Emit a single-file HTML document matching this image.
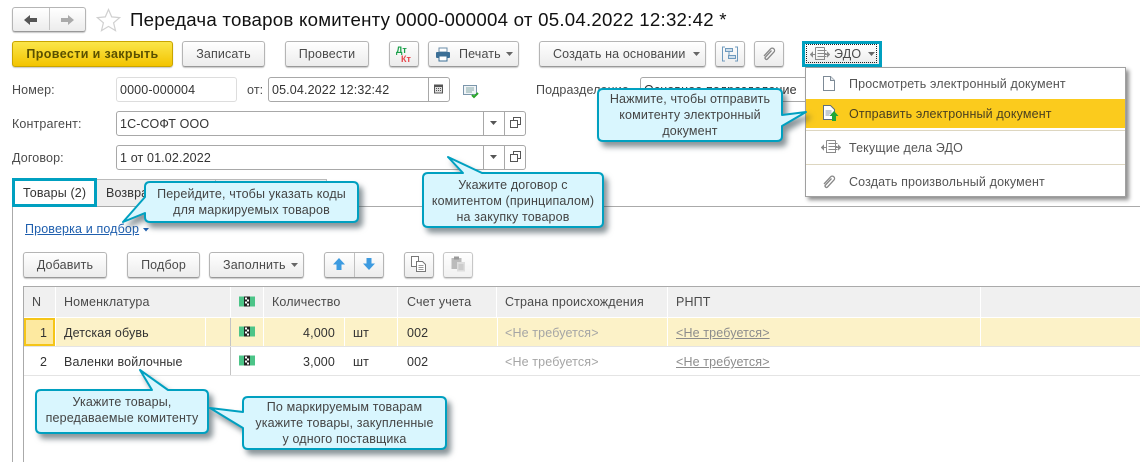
<!DOCTYPE html>
<html lang="ru"><head><meta charset="utf-8"><title>Передача товаров</title>
<style>
html,body{margin:0;padding:0;background:#fff}
#p{position:relative;width:1140px;height:462px;overflow:hidden;background:#fff;font:12.5px/14px "Liberation Sans","Noto Sans CJK SC",sans-serif;color:#4a4a4a;letter-spacing:.14px}
#p div,#p svg.a{position:absolute}
.t{white-space:nowrap}
.b{box-sizing:border-box;border:1px solid #b5b5b5;border-bottom:1px solid #999;border-radius:3px;background:linear-gradient(#fff,#ececec);box-shadow:0 1px 1px rgba(0,0,0,.22);text-align:center;white-space:nowrap;line-height:24px;height:26px}
.i{box-sizing:border-box;border:1px solid #a8a8a8;border-radius:3px;background:#fff;height:25px;line-height:25px;padding-left:3px;white-space:nowrap;color:#333}
.l{width:1px;background:#a8a8a8}
.h{background:#f0f0f0;height:30px;top:287px;line-height:30px;padding-left:9px;box-sizing:border-box;white-space:nowrap}
.r{line-height:14px;white-space:nowrap;color:#333}
.c{text-align:center;white-space:nowrap;color:#444;line-height:16px}
.m{left:849px;white-space:nowrap;color:#555}
</style></head><body><div id="p">

<!-- nav -->
<div class="b" style="left:12px;top:7px;width:74px;height:25px"></div>
<div style="left:49px;top:8px;width:1px;height:22px;background:#c4c4c4"></div>
<svg class="a" style="left:22px;top:13px" width="56" height="14"><path d="M2 7l6-5v3h7v4H8v3z" fill="#555"/><path d="M52 7l-6-5v3h-7v4h7v3z" fill="#aaa"/></svg>
<svg class="a" style="left:96px;top:8px" width="25" height="24"><path d="M12.5 1.5l3.2 7.4 8 .7-6.1 5.2 1.900 7.800-7-4.200-7 4.200 1.900-7.800L1.300 9.600l8-.7z" fill="#fff" stroke="#d0d0d0" stroke-width="1.200"/></svg>
<div class="t" style="left:130px;top:9px;font-size:18.67px;line-height:22px;color:#111;letter-spacing:.24px">Передача товаров комитенту 0000-000004 от 05.04.2022 12:32:42 *</div>

<!-- cmd bar -->
<div class="b" style="left:12px;top:41px;width:161px;background:linear-gradient(#fbe64a,#f3c400);border-color:#c9a500;font-weight:bold;color:#5a5000;letter-spacing:.38px">Провести и закрыть</div>
<div class="b" style="left:182px;top:41px;width:83px">Записать</div>
<div class="b" style="left:285px;top:41px;width:84px">Провести</div>
<div class="b" style="left:389px;top:41px;width:30px"></div>
<div class="t" style="left:396px;top:46px;font-size:9px;line-height:9px;font-weight:bold;color:#1aa04a;letter-spacing:0">Дт</div>
<div class="t" style="left:401px;top:55px;font-size:9px;line-height:9px;font-weight:bold;color:#e8454a;letter-spacing:0">Кт</div>
<div class="b" style="left:428px;top:41px;width:91px;text-align:left;padding-left:30px">Печать</div>
<svg class="a" style="left:435px;top:47px" width="16" height="15"><path d="M4 1h8v4H4z" fill="#fff" stroke="#6a8ca8"/><rect x="1" y="5" width="14" height="6" rx="1" fill="#3b6f96"/><path d="M4 9h8v5H4z" fill="#fff" stroke="#3b6f96"/></svg>
<svg class="a" style="left:506px;top:52px" width="8" height="5"><path d="M0 0h7L3.500 4z" fill="#666"/></svg>
<div class="b" style="left:539px;top:41px;width:167px;text-align:left;padding-left:13px">Создать на основании</div>
<svg class="a" style="left:693px;top:52px" width="8" height="5"><path d="M0 0h7L3.500 4z" fill="#666"/></svg>
<div class="b" style="left:715px;top:41px;width:30px"></div>
<svg class="a" style="left:722px;top:46px" width="16" height="16" fill="none"><path d="M3 1H.5v14H3M13 1h2.500v14H13" stroke="#6f9abd"/><rect x="3.500" y="2.500" width="7" height="3" fill="#cfdfec" stroke="#6f9abd"/><rect x="6.500" y="9.500" width="7" height="3" fill="#cfdfec" stroke="#6f9abd"/><path d="M7 6v3" stroke="#6f9abd"/></svg>
<div class="b" style="left:754px;top:41px;width:30px"></div>
<svg class="a" style="left:762px;top:46px" width="15" height="16" fill="none" stroke="#888" stroke-width="1.300"><path d="M2 10l6.500-7a2.300 2.300 0 0 1 3.500 3l-6.500 7a1.400 1.400 0 0 1-2-2l6-6.500"/></svg>

<!-- EDO -->
<div style="left:802px;top:41px;width:80px;height:26px;box-sizing:border-box;border:3px solid #00a0c0;background:linear-gradient(#fff,#ececec)"></div>
<div style="left:806px;top:44px;width:71px;height:19px;box-sizing:border-box;border:1px dotted #222"></div>
<svg class="a" style="left:810px;top:46px" width="20" height="16" fill="none" stroke="#8a8a8a"><path d="M5.500 1.500h9M5.500 1.500v12h9v-12M7.500 4.500h9M7.500 7.500h9M7.500 10.500h9M1 8.500h4M15 8.500h4"/><path d="M.5 8.500l2-2v4zM19.500 8.500l-2-2v4z" fill="#8a8a8a"/></svg>
<div class="t" style="left:834px;top:47px">ЭДО</div>
<svg class="a" style="left:868px;top:52px" width="8" height="5"><path d="M0 0h7L3.500 4z" fill="#666"/></svg>

<!-- fields -->
<div class="t" style="left:12px;top:83px">Номер:</div>
<div class="i" style="left:116px;top:77px;width:121px;border-color:#ddd">0000-000004</div>
<div class="t" style="left:247px;top:83px">от:</div>
<div class="i" style="left:268px;top:77px;width:182px">05.04.2022 12:32:42</div>
<div class="l" style="left:428px;top:78px;height:23px"></div>
<svg class="a" style="left:433px;top:83px" width="12" height="12"><path d="M1 1.500h9v9H1z" fill="#555"/><path d="M2 4h7v5.500H2z" fill="#ddd"/><path d="M3 5h1v1H3zM5 5h1v1H5zM7 5h1v1H7zM3 7h1v1H3zM5 7h1v1H5zM7 7h1v1H7z" fill="#555"/></svg>
<svg class="a" style="left:463px;top:85px" width="17" height="14"><path d="M.5.500h13v9H.5z" fill="#f0f4f7" stroke="#7b96ab"/><path d="M3 3h8M3 5h8M3 7h6" stroke="#8aa"/><path d="M9 10l2 2 4-4" fill="none" stroke="#2aa52a" stroke-width="2"/></svg>
<div class="t" style="left:536px;top:83px">Подразделение</div>
<div class="i" style="left:640px;top:77px;width:180px">Основное подразделение</div>

<div class="t" style="left:12px;top:117px">Контрагент:</div>
<div class="i" style="left:116px;top:111px;width:410px">1С-СОФТ ООО</div>
<div class="l" style="left:483px;top:112px;height:23px"></div><div class="l" style="left:504px;top:112px;height:23px"></div>
<svg class="a" style="left:490px;top:121px" width="8" height="5"><path d="M0 0h7L3.500 4z" fill="#555"/></svg>
<svg class="a" style="left:510px;top:117px" width="11" height="11" fill="#fff" stroke="#555"><path d="M3.500.500h7v7h-7z"/><path d="M.5 3.500h7v7h-7z"/></svg>

<div class="t" style="left:12px;top:151px">Договор:</div>
<div class="i" style="left:116px;top:145px;width:410px">1 от 01.02.2022</div>
<div class="l" style="left:483px;top:146px;height:23px"></div><div class="l" style="left:504px;top:146px;height:23px"></div>
<svg class="a" style="left:490px;top:155px" width="8" height="5"><path d="M0 0h7L3.500 4z" fill="#555"/></svg>
<svg class="a" style="left:510px;top:151px" width="11" height="11" fill="#fff" stroke="#555"><path d="M3.500.500h7v7h-7z"/><path d="M.5 3.500h7v7h-7z"/></svg>

<!-- tabs -->
<div style="left:12px;top:206px;width:1128px;height:1px;background:#aaa"></div>
<div style="left:12px;top:206px;width:1px;height:256px;background:#aaa"></div>
<div style="left:97px;top:179px;width:118px;height:27px;background:#eee;border-top:1px solid #bbb;box-sizing:border-box"></div>
<div style="left:215px;top:179px;width:112px;height:27px;background:#eee;border:1px solid #bbb;border-bottom:0;box-sizing:border-box"></div>
<div class="t" style="left:106px;top:186px;color:#333">Возврат</div>
<div style="left:12px;top:178px;width:85px;height:29px;box-sizing:border-box;border:3px solid #00a0c0;background:#fff"></div>
<div class="t" style="left:23px;top:186px;color:#333">Товары (2)</div>

<div class="t" style="left:25px;top:222px;color:#1f5fae;text-decoration:underline">Проверка и подбор</div>
<svg class="a" style="left:142px;top:228px" width="8" height="5"><path d="M1 0h6L4 3.500z" fill="#1f5fae"/></svg>

<div class="b" style="left:23px;top:252px;width:84px">Добавить</div>
<div class="b" style="left:127px;top:252px;width:73px">Подбор</div>
<div class="b" style="left:209px;top:252px;width:95px;text-align:left;padding-left:13px">Заполнить</div>
<svg class="a" style="left:291px;top:263px" width="8" height="5"><path d="M0 0h7L3.500 4z" fill="#666"/></svg>
<div class="b" style="left:324px;top:252px;width:60px"></div>
<div style="left:354px;top:253px;width:1px;height:24px;background:#c0c0c0"></div>
<svg class="a" style="left:332px;top:257px" width="44" height="15"><path d="M7 1l6 6.500H9.500V13h-5V7.500H1z" fill="#3d9be0"/><path d="M37 13l6-6.500h-3.500V1h-5v5.500H31z" fill="#3d9be0"/></svg>
<div class="b" style="left:404px;top:252px;width:30px"></div>
<svg class="a" style="left:411px;top:256px" width="16" height="16" fill="#fff" stroke="#777"><path d="M.5.500h7v10h-7z"/><path d="M5.500 5.500h6l3 3v7h-9z"/><path d="M7.500 9.500h5M7.500 11.500h5M7.500 13.500h5" stroke="#999"/></svg>
<div class="b" style="left:443px;top:252px;width:30px;opacity:.75"></div>
<svg class="a" style="left:451px;top:256px" width="15" height="16"><path d="M.5 2h10v11H.5z" fill="#bbb"/><path d="M3 .500h5v3H3z" fill="#999"/><path d="M6 6h8v9.500H6z" fill="#ddd"/><path d="M7.500 9h5M7.500 11h5M7.500 13h5" stroke="#bbb"/></svg>

<!-- table -->
<div style="left:23px;top:286px;width:1117px;height:1px;background:#aaa"></div>
<div style="left:23px;top:286px;width:1px;height:176px;background:#aaa"></div>
<div class="h" style="left:24px;width:31px;padding-left:8px">N</div>
<div class="h" style="left:56px;width:174px;padding-left:8px">Номенклатура</div>
<div class="h" style="left:231px;width:32px"></div>
<div class="h" style="left:264px;width:133px;padding-left:8px">Количество</div>
<div class="h" style="left:398px;width:98px">Счет учета</div>
<div class="h" style="left:497px;width:170px;padding-left:8px">Страна происхождения</div>
<div class="h" style="left:668px;width:312px;padding-left:8px">РНПТ</div>
<div class="h" style="left:981px;width:159px"></div>

<div style="left:24px;top:318px;width:1116px;height:28px;background:#fcf2c8"></div>
<div style="left:24px;top:318px;width:31px;height:28px;box-sizing:border-box;border:2px solid #f5c518;background:#fde9a0"></div>
<div style="left:55px;top:318px;width:1px;height:28px;background:#fff"></div>
<div style="left:205px;top:318px;width:1px;height:28px;background:#fff"></div>
<div style="left:230px;top:318px;width:1px;height:57px;background:#c4c4c4"></div>
<div style="left:263px;top:318px;width:1px;height:28px;background:#fff"></div>
<div style="left:344px;top:318px;width:1px;height:28px;background:#fff"></div>
<div style="left:397px;top:318px;width:1px;height:28px;background:#fff"></div>
<div style="left:497px;top:318px;width:1px;height:28px;background:#fff"></div>
<div style="left:667px;top:318px;width:1px;height:28px;background:#fff"></div>
<div style="left:980px;top:318px;width:1px;height:28px;background:#fff"></div>
<div style="left:24px;top:346px;width:1116px;height:1px;background:#e4e4e4"></div>
<div style="left:24px;top:375px;width:1116px;height:1px;background:#e4e4e4"></div>

<svg class="a" style="left:239px;top:296px" width="17" height="11"><rect width="16" height="10" y=".5" fill="#4cc488"/><rect x="5" y=".5" width="6" height="10" fill="#222"/><path d="M6 1.500h2v2H6zM8 3.500h2v2H8zM6 5.500h2v2H6zM8 7.500h2v2H8z" fill="#fff"/></svg>
<svg class="a" style="left:239px;top:326px" width="17" height="11"><rect width="16" height="10" y=".5" fill="#4cc488"/><rect x="5" y=".5" width="6" height="10" fill="#222"/><path d="M6 1.500h2v2H6zM8 3.500h2v2H8zM6 5.500h2v2H6zM8 7.500h2v2H8z" fill="#fff"/></svg>
<svg class="a" style="left:239px;top:355px" width="17" height="11"><rect width="16" height="10" y=".5" fill="#4cc488"/><rect x="5" y=".5" width="6" height="10" fill="#222"/><path d="M6 1.500h2v2H6zM8 3.500h2v2H8zM6 5.500h2v2H6zM8 7.500h2v2H8z" fill="#fff"/></svg>

<div class="r" style="left:40px;top:326px">1</div>
<div class="r" style="left:64px;top:326px">Детская обувь</div>
<div class="r" style="left:303px;top:326px">4,000</div>
<div class="r" style="left:353px;top:326px">шт</div>
<div class="r" style="left:407px;top:326px">002</div>
<div class="r" style="left:505px;top:326px;color:#a5a5a5">&lt;Не требуется&gt;</div>
<div class="r" style="left:676px;top:326px;color:#8c8c8c;text-decoration:underline">&lt;Не требуется&gt;</div>

<div class="r" style="left:40px;top:355px">2</div>
<div class="r" style="left:64px;top:355px">Валенки войлочные</div>
<div class="r" style="left:303px;top:355px">3,000</div>
<div class="r" style="left:353px;top:355px">шт</div>
<div class="r" style="left:407px;top:355px">002</div>
<div class="r" style="left:505px;top:355px;color:#a5a5a5">&lt;Не требуется&gt;</div>
<div class="r" style="left:676px;top:355px;color:#8c8c8c;text-decoration:underline">&lt;Не требуется&gt;</div>

<!-- menu -->
<div style="left:805px;top:67px;width:321px;height:130px;box-sizing:border-box;border:1px solid #a0a0a0;background:#fff;box-shadow:3px 3px 4px rgba(0,0,0,.45)"></div>
<div style="left:806px;top:99px;width:319px;height:29px;background:#fbcb1d"></div>
<div style="left:806px;top:130px;width:319px;height:1px;background:#ddd6c0"></div>
<div style="left:806px;top:164px;width:319px;height:1px;background:#ddd6c0"></div>
<div class="m" style="top:77px">Просмотреть электронный документ</div>
<div class="m" style="top:107px;color:#4a4020">Отправить электронный документ</div>
<div class="m" style="top:141px">Текущие дела ЭДО</div>
<div class="m" style="top:175px">Создать произвольный документ</div>
<svg class="a" style="left:822px;top:76px" width="14" height="16"><path d="M1.500.500h7l4 4v10h-11z" fill="#fff" stroke="#7d8a96"/><path d="M8.500.500v4h4" fill="#e4e8ec" stroke="#7d8a96"/></svg>
<svg class="a" style="left:822px;top:105px" width="17" height="17"><path d="M1.500.500h7l4 4v10h-11z" fill="#fff" stroke="#5f6f7d"/><path d="M3.500 6h6M3.500 8h6M3.500 10h4" stroke="#8a9aa8"/><path d="M12 6l4.500 5H14v5h-4v-5H7.500z" fill="#1fa637"/></svg>
<svg class="a" style="left:821px;top:139px" width="20" height="16" fill="none" stroke="#8a8a8a"><path d="M5.500 1.500h9M5.500 1.500v12h9v-12M7.500 4.500h9M7.500 7.500h9M7.500 10.500h9M1 8.500h4M15 8.500h4"/><path d="M.5 8.500l2-2v4zM19.500 8.500l-2-2v4z" fill="#8a8a8a"/></svg>
<svg class="a" style="left:822px;top:174px" width="15" height="16" fill="none" stroke="#888" stroke-width="1.300"><path d="M2 10l6.500-7a2.300 2.300 0 0 1 3.500 3l-6.500 7a1.400 1.400 0 0 1-2-2l6-6.500"/></svg>

<!-- callouts -->
<svg class="a" style="left:0;top:0;filter:drop-shadow(4px 5px 3px rgba(40,60,70,.55))" width="1140" height="462" fill="#d9f6fe" stroke="#00a0c0" stroke-width="2" stroke-linejoin="round">
<path d="M603 89h174q5 0 5 5v21l24-3-24 14v10q0 5-5 5H603q-5 0-5-5V94q0-5 5-5z"/>
<path d="M448 157l34 16h116q5 0 5 5v44q0 5-5 5H428q-5 0-5-5v-44q0-5 5-5h35z"/>
<path d="M150 182h203q5 0 5 5v30q0 5-5 5H150q-5 0-5-5v-4l-22 9 22-25v-10q0-5 5-5z"/>
<path d="M140 370l28 20h35q5 0 5 5v33q0 5-5 5H41q-5 0-5-5v-33q0-5 5-5h111z"/>
<path d="M248 397h193q5 0 5 5v42q0 5-5 5H248q-5 0-5-5v-16l-33-20 33 4v-10q0-5 5-5z"/>
</svg>
<div class="c" style="left:598px;top:91px;width:184px">Нажмите, чтобы отправить<br>комитенту электронный<br>документ</div>
<div class="c" style="left:423px;top:177px;width:180px">Укажите договор с<br>комитентом (принципалом)<br>на закупку товаров</div>
<div class="c" style="left:145px;top:186px;width:213px">Перейдите, чтобы указать коды<br>для маркируемых товаров</div>
<div class="c" style="left:36px;top:394px;width:172px">Укажите товары,<br>передаваемые комитенту</div>
<div class="c" style="left:243px;top:399px;width:203px">По маркируемым товарам<br>укажите товары, закупленные<br>у одного поставщика</div>

</div></body></html>
